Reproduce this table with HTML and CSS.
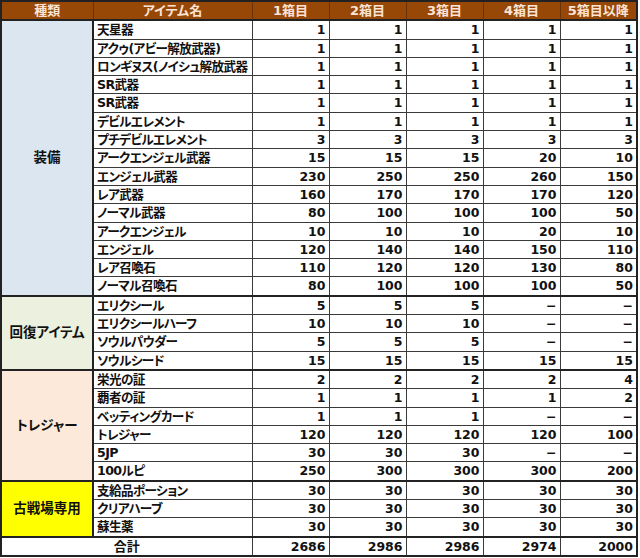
FILE: index.html
```html
<!DOCTYPE html>
<html lang="ja">
<head>
<meta charset="utf-8">
<title>箱別アイテム数</title>
<link rel="stylesheet" href="styles.css">
</head>
<body>
<table class="sheet">
  <colgroup>
    <col class="c-kind">
    <col class="c-name">
    <col class="c-num"><col class="c-num"><col class="c-num"><col class="c-num"><col class="c-num">
  </colgroup>
  <thead>
    <tr class="head">
      <th>種類</th><th>アイテム名</th><th>1箱目</th><th>2箱目</th><th>3箱目</th><th>4箱目</th><th>5箱目以降</th>
    </tr>
  </thead>
  <tbody>
    <tr><td class="kind equip" rowspan="15">装備</td><td class="name">天星器</td><td>1</td><td>1</td><td>1</td><td>1</td><td>1</td></tr>
    <tr><td class="name">アクゥ(アビー解放武器)</td><td>1</td><td>1</td><td>1</td><td>1</td><td>1</td></tr>
    <tr><td class="name">ロンギヌス(ノイシュ解放武器</td><td>1</td><td>1</td><td>1</td><td>1</td><td>1</td></tr>
    <tr><td class="name">SR武器</td><td>1</td><td>1</td><td>1</td><td>1</td><td>1</td></tr>
    <tr><td class="name">SR武器</td><td>1</td><td>1</td><td>1</td><td>1</td><td>1</td></tr>
    <tr><td class="name">デビルエレメント</td><td>1</td><td>1</td><td>1</td><td>1</td><td>1</td></tr>
    <tr><td class="name">プチデビルエレメント</td><td>3</td><td>3</td><td>3</td><td>3</td><td>3</td></tr>
    <tr><td class="name">アークエンジェル武器</td><td>15</td><td>15</td><td>15</td><td>20</td><td>10</td></tr>
    <tr><td class="name">エンジェル武器</td><td>230</td><td>250</td><td>250</td><td>260</td><td>150</td></tr>
    <tr><td class="name">レア武器</td><td>160</td><td>170</td><td>170</td><td>170</td><td>120</td></tr>
    <tr><td class="name">ノーマル武器</td><td>80</td><td>100</td><td>100</td><td>100</td><td>50</td></tr>
    <tr><td class="name">アークエンジェル</td><td>10</td><td>10</td><td>10</td><td>20</td><td>10</td></tr>
    <tr><td class="name">エンジェル</td><td>120</td><td>140</td><td>140</td><td>150</td><td>110</td></tr>
    <tr><td class="name">レア召喚石</td><td>110</td><td>120</td><td>120</td><td>130</td><td>80</td></tr>
    <tr class="end"><td class="name">ノーマル召喚石</td><td>80</td><td>100</td><td>100</td><td>100</td><td>50</td></tr>

    <tr><td class="kind heal" rowspan="4">回復アイテム</td><td class="name">エリクシール</td><td>5</td><td>5</td><td>5</td><td>−</td><td>−</td></tr>
    <tr><td class="name">エリクシールハーフ</td><td>10</td><td>10</td><td>10</td><td>−</td><td>−</td></tr>
    <tr><td class="name">ソウルパウダー</td><td>5</td><td>5</td><td>5</td><td>−</td><td>−</td></tr>
    <tr class="end"><td class="name">ソウルシード</td><td>15</td><td>15</td><td>15</td><td>15</td><td>15</td></tr>

    <tr><td class="kind treasure" rowspan="6">トレジャー</td><td class="name">栄光の証</td><td>2</td><td>2</td><td>2</td><td>2</td><td>4</td></tr>
    <tr><td class="name">覇者の証</td><td>1</td><td>1</td><td>1</td><td>1</td><td>2</td></tr>
    <tr><td class="name">ベッティングカード</td><td>1</td><td>1</td><td>1</td><td>−</td><td>−</td></tr>
    <tr><td class="name">トレジャー</td><td>120</td><td>120</td><td>120</td><td>120</td><td>100</td></tr>
    <tr><td class="name">5JP</td><td>30</td><td>30</td><td>30</td><td>−</td><td>−</td></tr>
    <tr class="end"><td class="name">100ルピ</td><td>250</td><td>300</td><td>300</td><td>300</td><td>200</td></tr>

    <tr><td class="kind old" rowspan="3">古戦場専用</td><td class="name">支給品ポーション</td><td>30</td><td>30</td><td>30</td><td>30</td><td>30</td></tr>
    <tr><td class="name">クリアハーブ</td><td>30</td><td>30</td><td>30</td><td>30</td><td>30</td></tr>
    <tr class="end"><td class="name">蘇生薬</td><td>30</td><td>30</td><td>30</td><td>30</td><td>30</td></tr>

    <tr class="total"><td class="label" colspan="2">合計</td><td>2686</td><td>2986</td><td>2986</td><td>2974</td><td>2000</td></tr>
  </tbody>
</table>
</body>
</html>
```

FILE: styles.css
```css
html, body {
  margin: 0;
  padding: 0;
  background: #ffffff;
}

.sheet {
  border-collapse: collapse;
  table-layout: fixed;
  width: 637px;
  border: 2px solid #222;
  font-family: "DejaVu Sans", "Noto Sans CJK JP", sans-serif;
  font-weight: bold;
  font-size: 12.5px;
  color: #111;
  font-feature-settings: "palt";
}

.c-kind { width: 92px; }
.c-name { width: 159px; }
.c-num { width: 77px; }

.sheet th,
.sheet td {
  border: 1px solid #3a3a3a;
  padding: 0 3px;
  height: 17.3px;
  line-height: 17.3px;
  white-space: nowrap;
  overflow: hidden;
}

.head th {
  background: #974706;
  color: #fbe4d5;
  text-align: center;
  font-size: 13px;
  border-color: #6b3205;
  border-bottom: 2px solid #222;
}

.sheet td {
  text-align: right;
}

.sheet td.name {
  text-align: left;
  font-size: 12.6px;
  letter-spacing: -0.6px;
}

.sheet td.kind {
  text-align: center;
  vertical-align: middle;
  font-size: 13.5px;
  border-right: 2px solid #222;
  border-bottom: 2px solid #222;
}

.equip { background: #dce6f1; }
.heal { background: #ebf1de; }
.treasure { background: #fde9d9; }
.old { background: #ffff00; }

.end td {
  border-bottom: 2px solid #222;
}

.total td.label {
  text-align: center;
  font-size: 13px;
}
```
